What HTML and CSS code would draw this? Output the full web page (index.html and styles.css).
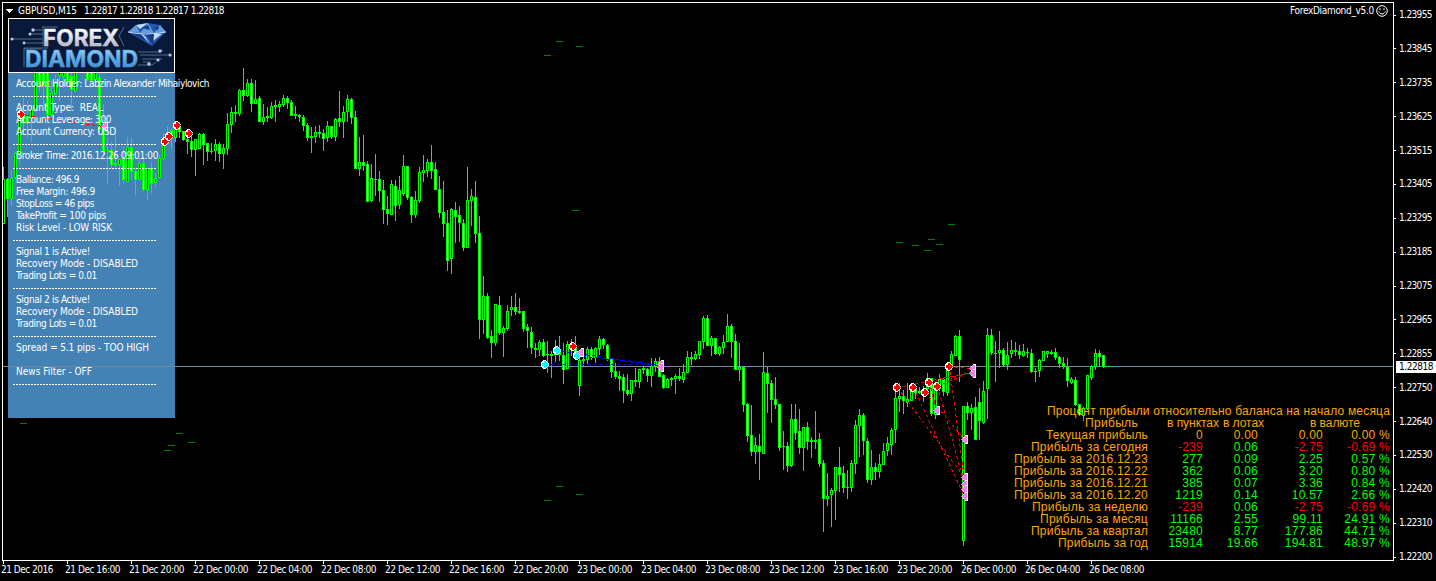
FILE: index.html
```html
<!DOCTYPE html>
<html lang="ru">
<head>
<meta charset="utf-8">
<title>GBPUSD,M15</title>
<link rel="stylesheet" href="styles.css">
</head>
<body>
<div class="terminal">
  <main class="chart">
    <div class="panel-bg"></div>
    <svg class="plot" id="plot" width="1394" height="561" viewBox="0 0 1394 561" shape-rendering="crispEdges"></svg>
    <header class="titlebar">
      <svg class="caret" width="7" height="4" viewBox="0 0 7 4" shape-rendering="crispEdges"><path d="M0 0h7L3.5 4z" fill="#fff"/></svg>
      <span class="symbol" data-width="59">GBPUSD,M15</span>
      <span class="quotes" data-width="140">1.22817 1.22818 1.22817 1.22818</span>
      <span class="expert" data-width="84">ForexDiamond_v5.0</span>
      <svg class="smile" width="12" height="12" viewBox="0 0 12 12" fill="none" stroke="#fff"><circle cx="6" cy="6" r="5.3"/><path d="M4 3.2v2M8 3.2v2M2.8 6.5C3.4 9.8 8.6 9.8 9.2 6.5"/></svg>
    </header>
    <aside class="panel">
      <svg class="logo" width="167" height="55" viewBox="0 0 167 55">
        <defs>
          <linearGradient id="silver" x1="0" y1="0" x2="0" y2="1"><stop offset=".2" stop-color="#fff"/><stop offset=".55" stop-color="#d5d5df"/><stop offset=".9" stop-color="#a5a3b4"/></linearGradient>
          <linearGradient id="azure" x1="0" y1="0" x2="0" y2="1"><stop offset=".2" stop-color="#8cc8f4"/><stop offset=".55" stop-color="#5aa8e4"/><stop offset=".9" stop-color="#3b80c6"/></linearGradient>
        </defs>
        <rect x=".5" y=".5" width="166" height="54" fill="#08193a" stroke="#fff"/>
        <g fill="none" stroke="#66809f" stroke-width=".8">
          <path d="M4 21h30M16 25h20M22 16h13M26 12h9M35 8v20M35 9h15M16 49V30h24M16 31h18M116 9l-5 9 5 10M130 34h22l3-2M132 37h28M134 41h20M130 47h14l4-3M135 44h8"/>
        </g>
        <g fill="#b9cbe0"><circle cx="4" cy="21" r="1.5"/><circle cx="16" cy="25" r="1.4"/><circle cx="22" cy="16" r="1.5"/><circle cx="25" cy="12" r="1.7"/><circle cx="152" cy="33" r="1.7"/><circle cx="162" cy="37" r="1.6"/><circle cx="150" cy="42" r="1.6"/><circle cx="141" cy="46" r="1.7"/></g>
        <text class="logo-word" x="35" y="28" font-size="23" textLength="76" lengthAdjust="spacingAndGlyphs" fill="url(#silver)" stroke="#d9d9e2">FOREX</text>
        <text class="logo-word" x="17" y="49" font-size="23.5" textLength="113" lengthAdjust="spacingAndGlyphs" fill="url(#azure)" stroke="#5fabe6">DIAMOND</text>
        <path d="M120 14l8-7 12-2 12 2 6 7-14 14z" fill="#2356ae"/>
        <path d="M120 14l8-7 4 8zM140 5l-8 10h14zM158 14l-6-7-6 8z" fill="#5f9ce0"/>
        <path d="M128 7l12-2-8 6zM132 15l5 3 5 8zM146 15l8 1-9 7z" fill="#bcdcfa"/>
        <path d="M123 15l9 0 6 8zM139 17l7-2-1 12zM134 10l6-3 2 5zM147 9l4 0-2 4z" fill="#153a80"/>
        <path d="M120 14q16 4 38 0" stroke="#eaf5ff" stroke-width=".8" fill="none"/>
      </svg>
      <div class="info">
        <p data-width="193">Account Holder: Labzin Alexander Mihaiylovich</p>
        <hr>
        <p data-width="87"><span class="pre">Acount Type:  REAL</span></p>
        <p data-width="95">Account Leverage: 300</p>
        <p data-width="100">Account Currency: USD</p>
        <hr>
        <p data-width="142">Broker Time: 2016.12.26 09:01:00</p>
        <hr>
        <p data-width="63">Ballance: 496.9</p>
        <p data-width="79">Free Margin: 496.9</p>
        <p data-width="78">StopLoss = 46 pips</p>
        <p data-width="90">TakeProfit = 100 pips</p>
        <p data-width="96">Risk Level - LOW RISK</p>
        <hr>
        <p data-width="74">Signal 1 is Active!</p>
        <p data-width="122">Recovery Mode - DISABLED</p>
        <p data-width="81">Trading Lots = 0.01</p>
        <hr>
        <p data-width="74">Signal 2 is Active!</p>
        <p data-width="122">Recovery Mode - DISABLED</p>
        <p data-width="81">Trading Lots = 0.01</p>
        <hr>
        <p data-width="133">Spread = 5.1 pips - TOO HIGH</p>
        <p></p>
        <p data-width="76">News Filter - OFF</p>
        <hr>
      </div>
    </aside>
    <section class="profit" id="profit">
      <div class="profit-title"><span data-width="343">Процент прибыли относительно баланса на начало месяца</span></div>
      <div class="profit-head">
        <span data-width="53">Прибыль</span><span data-width="52">в пунктах</span><span data-width="41">в лотах</span><span data-width="50">в валюте</span>
      </div>
    </section>
  </main>
  <div class="price-axis" id="prices"></div>
  <div class="time-axis" id="times"></div>
  <div class="price-now"><span data-width="34">1.22818</span></div>
</div>
<script src="chart.js"></script>
</body>
</html>
```
FILE: styles.css
```css
* { box-sizing: border-box; }
body {
  margin: 0;
  background: #000;
  color: #fff;
  font: 10px/12px "DejaVu Sans Condensed", "DejaVu Sans", sans-serif;
  overflow: hidden;
}
.terminal {
  position: relative;
  display: grid;
  grid-template: 561px 20px / 1394px 42px;
  width: 1436px;
  height: 581px;
}
.chart { position: relative; }
.plot { position: absolute; left: 0; top: 0; }
.panel-bg {
  position: absolute;
  left: 8px;
  top: 18px;
  width: 167px;
  height: 400px;
  background: #4482b6;
}
.titlebar {
  position: relative;
  display: flex;
  align-items: center;
  height: 18px;
  padding: 4px 6px 0 6px;
  white-space: nowrap;
}
.symbol { margin-left: 5px; }
.quotes { margin-left: 7px; }
.expert { margin-left: auto; }
.smile { margin-left: 2px; }
.panel {
  position: relative;
  margin-left: 8px;
  width: 167px;
}
.logo { display: block; }
.logo-word { font-family: "Inter", "Liberation Sans", sans-serif; font-weight: 700; stroke-width: .5px; }
.info { padding: 5px 0 0 8px; }
.info p { margin: 0; height: 12px; white-space: nowrap; }
.pre { white-space: pre; }
.info hr {
  width: 144px;
  height: 12px;
  margin: 0 0 0 -3px;
  border: 0;
  background: repeating-linear-gradient(90deg, #fff 0 2px, transparent 2px 3px) 0 6px / 143px 1px no-repeat;
}
.profit {
  position: absolute;
  right: 4px;
  top: 405px;
  width: 400px;
  color: #ffa500;
  font: 12px/12px "Liberation Sans", Arial, sans-serif;
  white-space: nowrap;
}
.profit-title { text-align: right; height: 12px; }
.profit-head { display: flex; height: 12px; padding-left: 95px; }
.profit-head span:nth-child(2) { margin-left: 29px; }
.profit-head span:nth-child(3) { margin-left: 4px; }
.profit-head span:nth-child(4) { margin-left: 46px; }
.profit-row {
  display: grid;
  grid-template-columns: 158px 55px 55px 65px 67px;
  height: 12px;
  text-align: right;
}
.profit-row > span { letter-spacing: .25px; }
.up { color: #00ff00; }
.down { color: #ff0000; }
.price-axis {
  display: flex;
  flex-direction: column;
  justify-content: space-between;
  height: 554px;
  margin-top: 9px;
}
.price-axis div { display: flex; align-items: center; gap: 3px; height: 12px; }
.price-axis div::before { content: ""; width: 2px; height: 1px; background: #fff; }
.time-axis {
  grid-row: 2;
  grid-column: 1 / 3;
  display: grid;
  grid-template-columns: repeat(18, 64px);
  padding-left: 3px;
}
.time-axis div { white-space: nowrap; }
.time-axis div::before { content: ""; display: block; width: 1px; height: 3px; background: #fff; }
.time-axis span { margin-left: -2px; }
.price-now {
  position: absolute;
  right: 0;
  top: 361px;
  width: 40px;
  height: 12px;
  padding-left: 3px;
  background: #fff;
  color: #000;
}
[data-width] { display: block; }
.profit-title [data-width] { display: inline-block; }
```
FILE: chart.js
```js
const NS = "http://www.w3.org/2000/svg";
const plot = document.getElementById("plot");

function add(name, attrs) {
  const el = document.createElementNS(NS, name);
  for (const key in attrs) el.setAttribute(key, attrs[key]);
  plot.appendChild(el);
}
function rect(x, y, w, h, fill) {
  add("rect", { x, y, width: w, height: h, fill });
}

// Each row: wick top, body top, body bottom, wick bottom, filled flag.
// Segment values are divided by scale and shifted by y.
const segments = [
  { x: 3, y: 0, scale: 1, rows: "167,179,223,223,0 178,179,198,217,1 170,178,198,206,0 152,153,177,179,0 115,117,153,165,0 98,115,123,133,1 101,115,123,138,1 105,109,117,141,0 60,60,108,112,0 60,60,84,92,1 60,60,85,105,1 60,60,114,118,1 80,93,114,118,0 75,83,93,95,0 60,60,75,101,0 60,60,76,88,0 60,60,80,84,1 72,76,89,111,1 60,70,90,92,0 60,60,70,70,1 60,60,70,70,1 60,60,79,81,1 60,60,80,84,1 60,60,79,83,0 73,77,129,134,1 104,128,151,156,1 138,150,150,184,0 142,150,164,168,1 130,163,164,167,0 159,159,164,186,0 147,159,179,183,1 137,147,181,181,0 138,147,171,180,1 168,171,179,195,1 158,163,179,181,0 157,163,189,191,1 168,168,189,200,0 162,168,183,193,1 173,178,182,187,0 155,158,177,178,0 133,143,158,160,0 126,133,143,145,0 128,130,137,149,1 126,128,137,142,0 122,126,131,138,1 131,131,139,141,1 135,139,141,154,1 136,141,149,157,1 139,139,149,176,0 133,134,148,148,0 133,134,144,165,1 143,143,151,161,1 143,151,151,154,0 139,144,150,161,0 142,144,153,162,1 144,148,153,169,0 113,124,148,155,0" },
  { x: 231, y: 50, scale: 3, rows: "171,186,224,249,0 165,186,191,216,0 117,120,191,200,0 54,120,135,153,1 87,99,137,143,0 87,99,161,186,1 90,147,159,161,0 138,144,215,216,1 162,201,215,225,0 171,198,203,216,0 156,168,203,207,0 150,165,170,216,1 153,162,170,186,0 135,144,164,171,0 138,144,158,177,1 150,156,197,197,1 168,192,197,207,1 192,195,200,216,1 195,201,227,243,1 219,225,263,273,1 231,258,263,309,1 228,246,260,279,0 225,246,251,264,1 237,249,266,303,1 213,228,263,276,0 228,228,258,267,1 204,207,260,273,0 123,204,215,231,1 168,186,215,264,0 135,147,185,216,0 144,147,203,222,1 183,201,356,356,1 261,336,356,378,0 255,336,345,363,1 333,342,455,455,1 342,384,452,456,0 312,387,389,438,0 363,387,422,456,1 390,420,479,522,1 438,477,491,525,1 390,402,494,494,0 390,408,467,513,1 378,420,464,477,0 315,348,431,438,0 348,348,443,450,1 438,441,494,519,1 423,450,494,504,0 351,366,452,459,0 315,360,368,396,0 327,336,362,381,0 285,336,362,387,1 336,357,419,420,1 378,417,488,504,1 393,486,521,561,1 480,519,632,663,1 474,477,626,672,0 456,480,500,579,1 468,495,518,576,1 507,519,593,603,1 351,450,593,594,0 417,438,452,528,0 393,441,551,579,1" },
  { x: 479, y: 200, scale: 3, rows: "48,99,359,417,1 228,288,359,402,0 279,288,413,417,1 390,408,428,474,1 312,312,428,438,0 288,315,398,405,1 378,384,398,471,0 315,333,386,393,0 288,321,329,348,0 279,321,335,345,1 294,333,338,342,1 333,333,386,396,1 372,381,392,444,1 381,396,443,462,1 429,444,449,474,1 420,426,449,468,0 417,426,467,471,1 423,462,464,519,0 453,462,467,534,0 420,450,464,486,0 408,456,464,483,1 429,465,509,552,1 423,432,506,507,0 417,432,446,470,0 408,440,470,478,1 470,480,557,588,0 460,477,482,500,0 441,447,479,492,0 441,447,473,480,1 441,444,473,489,0 408,417,446,465,0 414,417,434,447,1 432,435,476,483,1 474,477,515,534,1 489,513,530,537,1 513,528,536,573,1 522,531,572,609,1 522,570,581,588,1 540,540,581,603,0 504,540,545,561,0 507,507,545,564,0 498,504,509,522,0 504,507,527,546,1 474,498,527,561,0 474,483,500,516,0 471,483,530,530,1 522,525,563,567,1 534,537,563,564,0 531,534,539,558,0 522,528,536,582,0 504,528,536,543,1 492,516,539,549,0 453,471,518,519,0" },
  { x: 691, y: 290, scale: 3, rows: "186,201,206,225,1 183,192,206,210,0 153,153,194,207,0 78,84,155,177,0 75,84,167,168,1 138,144,167,198,0 144,144,191,195,1 168,171,191,198,0 135,156,173,192,0 72,108,155,156,0 102,108,155,204,1 132,153,239,240,1 159,231,239,273,0 228,231,344,366,1 339,342,437,456,1 345,435,485,498,1 441,465,485,522,0 432,468,485,570,1 186,246,491,492,0 231,249,281,369,1 270,279,329,399,1 261,327,344,357,1 342,342,473,483,1 423,468,470,540,0 456,468,527,546,1 342,387,527,531,0 342,387,428,450,1 357,423,473,492,1 411,411,473,543,0 396,411,455,480,1 441,450,455,504,1 363,450,455,477,0 429,447,521,531,1 510,519,626,726,1 549,618,626,648,0 594,600,614,711,0 531,531,602,690,0" },
  { x: 839, y: 320, scale: 3, rows: "381,441,464,516,1 438,459,503,519,1 450,501,503,537,0 420,429,503,516,0 300,315,431,462,0 267,285,317,411,0 279,285,362,405,1 354,363,479,489,1 390,441,479,495,0 429,441,455,480,1 402,432,455,474,0 369,393,434,435,0 351,369,392,408,0 324,330,374,405,0 200,234,329,369,0 190,228,236,276,0 210,228,242,282,1 190,238,246,262,0 195,200,240,243,0 189,205,216,237,1 201,213,218,224,0 200,210,215,246,0 159,175,205,222,0 174,174,281,288,1 190,204,284,297,0 162,178,206,213,0 174,177,215,228,1 140,150,218,228,0 93,102,134,150,0 45,48,107,108,0 30,48,119,186,1 258,258,662,678,0 246,258,278,300,1 252,264,278,330,0 231,261,359,360,1 204,246,302,360,1 183,213,308,312,0 24,45,206,297,0" },
  { x: 991, y: 310, scale: 3, rows: "57,75,128,135,1 93,129,131,216,0 63,120,128,174,0 114,120,164,168,1 96,135,164,180,0 90,120,131,144,0 96,120,125,138,1 105,123,134,147,1 102,123,137,141,0 114,126,128,144,0 117,129,185,189,1 174,183,184,216,0 147,150,182,201,0 123,123,152,155,0 123,123,131,144,0 120,126,131,135,1 114,126,143,150,1 138,141,161,174,1 141,159,170,177,1 144,171,212,231,1 201,207,218,222,0 201,210,284,290,1 282,282,313,320,1 292,295,315,333,0 195,195,295,300,0 166,168,203,210,0 117,129,170,180,0 120,129,138,171,1 135,135,170,176,1 168,168,170,170,0" }
];

// Current price line
rect(3, 366, 1390, 1, "#778899");

for (const s of segments) {
  s.rows.split(" ").forEach((row, i) => {
    const v = row.split(",").map(Number);
    const [wt, bt, bb, wb] = v.slice(0, 4).map(n => s.y + Math.floor(n / s.scale));
    const x = s.x + 4 * i;
    rect(x, wt, 1, Math.max(1, wb - wt), "#00ff00");
    rect(x - 1, bt, 3, Math.max(1, bb - bt + 1), "#00ff00");
    if (bb - bt > 1) rect(x, bt + 1, 1, bb - bt - 1, v[4] ? "#ffffff" : "#000000");
  });
}

// Stop and target levels
for (const [x, y] of [[20,423],[176,433],[188,442],[168,445],[164,450],[572,210],[544,55],[556,41],[576,46],[544,500],[556,486],[576,494],[896,242],[912,245],[924,250],[928,239],[936,244],[948,224]])
  rect(x, y, 7, 1, "#008000");

// Trade connectors
const trades = [
  ["#f00",20,114,103,126],["#00f",544,364,660,364],["#00f",556,350,660,365],["#00f",577,355,660,365],
  ["#f00",897,387,964,477],["#f00",913,387,964,496],["#f00",937,386,964,484],["#f00",949,366,964,480],
  ["#f00",929,382,936,410],["#f00",925,392,964,439],["#f00",937,386,971,371],["#f00",949,366,971,368],
  ["#f00",897,387,971,372],["#f00",929,382,971,372]
];
for (const [stroke, x1, y1, x2, y2] of trades)
  add("line", { x1: x1 + .5, y1: y1 + .5, x2: x2 + .5, y2: y2 + .5, stroke, "stroke-dasharray": "3 3" });

// Entry arrows
for (const [x, y, fill] of [[20,114,"red"],[164,141,"red"],[168,136,"red"],[176,125,"red"],[188,133,"red"],[544,364,"cyan"],[556,350,"cyan"],[572,346,"red"],[576,355,"cyan"],[896,387,"red"],[912,387,"red"],[924,392,"red"],[928,382,"red"],[936,386,"red"],[948,366,"red"]]) {
  const transform = `translate(${x + 1} ${y})`;
  add("path", { d: "M-4-2h1v-1h1v-1h3v1h1v1h1v1h1v3h-1v1h-1v1h-1v1h-3v-1h-1v-1h-1z", transform, fill: "#fff" });
  add("path", { d: "M-3-1h2v-2h2v1h1v1h1v3h-1v1h-1v1h-2v-2h-2zM3 0h1v1h-1z", transform, fill });
}
// Exit arrows
for (const [x, y] of [[107,126],[583,352],[663,364],[663,367],[939,410],[967,439],[967,477],[967,484],[967,489],[967,496],[975,368],[975,373]]) {
  add("path", { d: "M-6 0h1v-1h1v-1h1v-1h1v-1h2v9h-2v-1h-1v-1h-1v-1h-1v-1h-1z", transform: `translate(${x} ${y})`, fill: "#ee82ee" });
  add("path", { d: "M0-4h1v9h-1zM-2-4h2v1h-2zM-2 4h2v1h-2zM-4-2h1v1h-1zM-4 2h1v1h-1z", transform: `translate(${x} ${y})`, fill: "#fff" });
}

// Frame
rect(2, 2, 1392, 1, "#fff");
rect(2, 2, 1, 559, "#fff");
rect(1393, 2, 1, 559, "#fff");
rect(2, 560, 1392, 1, "#fff");

const html = (tag, text, width) => `<${tag}${width ? ` data-width="${width}"` : ""}>${text}</${tag}>`;

document.getElementById("prices").innerHTML =
  "1.23955 1.23845 1.23735 1.23625 1.23515 1.23405 1.23295 1.23185 1.23075 1.22965 1.22855 1.22750 1.22640 1.22530 1.22420 1.22310 1.22200"
    .split(" ").map(p => `<div>${html("span", p, 33)}</div>`).join("");

const times = ["21 Dec 2016", "21 Dec 16:00", "21 Dec 20:00"];
for (const day of [22, 23])
  for (const h of ["00", "04", "08", "12", "16", "20"]) times.push(`${day} Dec ${h}:00`);
for (const h of ["00", "04", "08"]) times.push(`26 Dec ${h}:00`);
document.getElementById("times").innerHTML =
  times.map((t, i) => `<div>${html("span", t, i ? 55 : 52)}</div>`).join("");

const profit = [
  ["Текущая прибыль", 102, "0", "0.00", "0.00", "0.00 %", ""],
  ["Прибыль за сегодня", 117, "-239", "0.06", "-2.75", "-0.69 %", "down"],
  ["Прибыль за 2016.12.23", 134, "277", "0.09", "2.25", "0.57 %", "up"],
  ["Прибыль за 2016.12.22", 134, "362", "0.06", "3.20", "0.80 %", "up"],
  ["Прибыль за 2016.12.21", 134, "385", "0.07", "3.36", "0.84 %", "up"],
  ["Прибыль за 2016.12.20", 134, "1219", "0.14", "10.57", "2.66 %", "up"],
  ["Прибыль за неделю", 116, "-239", "0.06", "-2.75", "-0.69 %", "down"],
  ["Прибыль за месяц", 108, "11166", "2.55", "99.11", "24.91 %", "up"],
  ["Прибыль за квартал", 117, "23480", "8.77", "177.86", "44.71 %", "up"],
  ["Прибыль за год", 90, "15914", "19.66", "194.81", "48.97 %", "up"]
];
document.getElementById("profit").insertAdjacentHTML("beforeend", profit.map(([label, w, pts, lots, cur, pct, cls]) =>
  `<div class="profit-row"><div class="profit-title">${html("span", label, w)}</div>` +
  `<span class="${cls}">${pts}</span><span class="${cls && "up"}">${lots}</span>` +
  `<span class="${cls}">${cur}</span><span class="${cls}">${pct}</span></div>`).join(""));

for (const el of document.querySelectorAll("[data-width]")) {
  const width = Number(el.dataset.width);
  const range = document.createRange();
  range.selectNodeContents(el);
  const natural = range.getBoundingClientRect().width;
  el.style.letterSpacing = (width - natural) / el.textContent.length + "px";
  el.style.width = width + "px";
  el.style.whiteSpace = "pre";
}
```
